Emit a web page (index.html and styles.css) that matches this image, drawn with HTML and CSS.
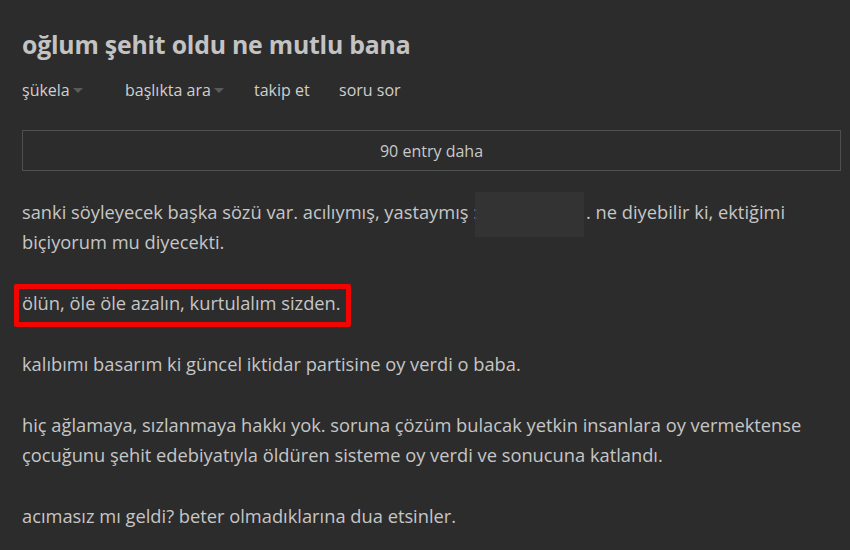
FILE: index.html
```html
<!DOCTYPE html>
<html lang="tr">
<head>
<meta charset="utf-8">
<link rel="stylesheet" href="styles.css">
</head>
<body>
<main class="topic">
  <h1 class="title">oğlum şehit oldu ne mutlu bana</h1>
  <nav class="tabs">
    <span class="tab tab-sukela">şükela<i class="caret"></i></span>
    <span class="tab tab-search">başlıkta ara<i class="caret"></i></span>
    <span class="tab tab-follow">takip et</span>
    <span class="tab">soru sor</span>
  </nav>
  <div class="more">90 entry daha</div>
  <div class="entry">
    <p>sanki söyleyecek başka sözü var. acılıymış, yastaymış :<span class="redact"></span>. ne diyebilir ki, ektiğimi biçiyorum mu diyecekti.</p>
    <p class="marked">ölün, öle öle azalın, kurtulalım sizden.</p>
    <p>kalıbımı basarım ki güncel iktidar partisine oy verdi o baba.</p>
    <p>hiç ağlamaya, sızlanmaya hakkı yok. soruna çözüm bulacak yetkin insanlara oy vermektense çocuğunu şehit edebiyatıyla öldüren sisteme oy verdi ve sonucuna katlandı.</p>
    <p>acımasız mı geldi? beter olmadıklarına dua etsinler.</p>
  </div>
</main>
</body>
</html>
```
FILE: styles.css
```css
html, body {
  margin: 0;
  padding: 0;
  background: #2c2c2c;
}
body {
  font-family: "Open Sans", "Noto Sans", sans-serif;
  color: #c6c6c6;
  width: 850px;
  height: 550px;
  overflow: hidden;
}
.topic {
  padding: 26px 9px 0 22px;
}
.title {
  margin: 0;
  font-size: 24.8px;
  line-height: 36px;
  font-weight: 700;
  color: #c3c3c3;
  letter-spacing: -0.2px;
}
.tabs {
  display: flex;
  margin-top: 16px;
  font-size: 16px;
  line-height: 24px;
  color: #cfcfcf;
}
.tab { display: inline-flex; align-items: center; }
.tab-sukela { width: 103px; }
.tab-search { width: 129px; }
.tab-follow { width: 85px; }
.caret {
  display: inline-block;
  width: 0; height: 0;
  margin-left: 3px;
  border-left: 5px solid transparent;
  border-right: 5px solid transparent;
  border-top: 5px solid #5a5a5a;
}
.more {
  margin-top: 28px;
  height: 39px;
  border: 1px solid #4f4f4f;
  display: flex;
  align-items: center;
  justify-content: center;
  font-size: 16px;
  color: #c9c9c9;
}
.entry {
  margin-top: 26px;
  font-size: 18.3px;
  line-height: 30px;
  padding-right: 20px;
}
.entry p {
  margin: 0 0 31px 0;
}
.redact {
  display: inline-block;
  width: 109px;
  height: 45px;
  margin-top: -5px;
  margin-bottom: -10px;
  margin-left: -3px;
  margin-right: 2px;
  vertical-align: top;
  background: rgba(52, 52, 52, 0.92);
}
.marked {
  position: relative;
}
.marked::after {
  content: "";
  position: absolute;
  left: -8px;
  top: -4px;
  width: 337px;
  height: 43px;
  box-sizing: border-box;
  border: 5px solid #f20500;
  border-radius: 2px;
}
```
